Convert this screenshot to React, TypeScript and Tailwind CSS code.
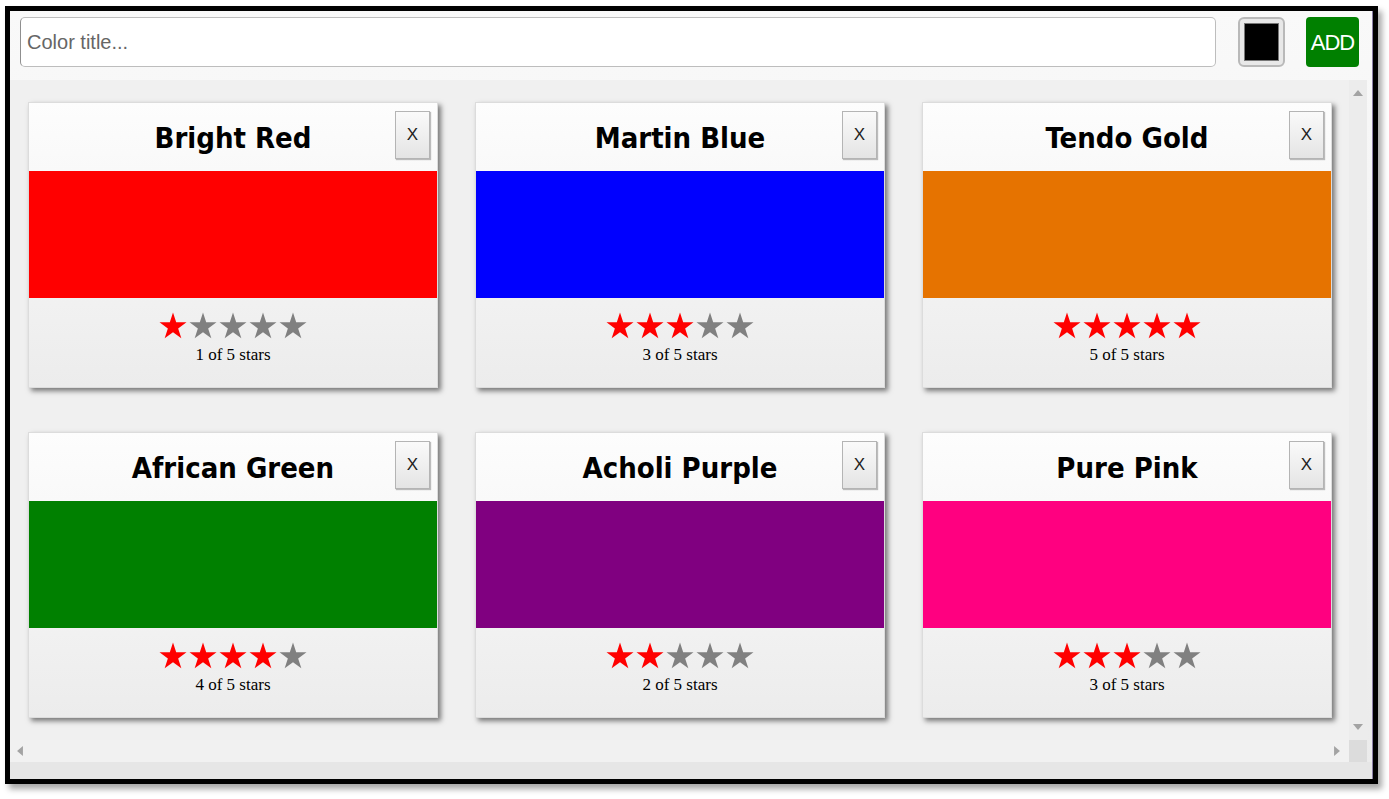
const colors = [
  { title: 'Bright Red', hex: '#ff0000', rating: 1 },
  { title: 'Martin Blue', hex: '#0000ff', rating: 3 },
  { title: 'Tendo Gold', hex: '#e67300', rating: 5 },
  { title: 'African Green', hex: '#008000', rating: 4 },
  { title: 'Acholi Purple', hex: '#800080', rating: 2 },
  { title: 'Pure Pink', hex: '#ff0080', rating: 3 },
];

const Star = ({ selected }: { selected: boolean }) => (
  <svg viewBox="0 0 24 24" className="w-[30px] h-[30px]">
    <path
      d="M12 1.2l2.55 7.85h8.25l-6.68 4.85 2.55 7.85L12 16.9l-6.67 4.85 2.55-7.85L1.2 9.05h8.25z"
      fill={selected ? '#ff0000' : '#808080'}
    />
  </svg>
);

const StarRating = ({ rating }: { rating: number }) => (
  <div className="flex flex-col items-center">
    <div className="flex">
      {[0, 1, 2, 3, 4].map((i) => (
        <Star key={i} selected={i < rating} />
      ))}
    </div>
    <p className="text-[17px] leading-[20px] mt-[4px] text-black font-['Liberation_Serif',serif]">
      {rating} of 5 stars
    </p>
  </div>
);

const ColorCard = ({ title, hex, rating }: { title: string; hex: string; rating: number }) => (
  <div className="h-[286px] flex flex-col bg-gradient-to-b from-[#fdfdfd] to-[#ececec] border border-[#dcdcdc] shadow-[3px_3px_5px_rgba(0,0,0,0.5)]">
    <div className="relative h-[68px] flex items-center justify-center pt-[4px]">
      <h1 className="text-[29px] font-bold text-black font-['DejaVu_Sans_Condensed','Liberation_Sans',sans-serif]">
        {title}
      </h1>
      <button className="absolute right-[7px] top-[8px] w-[35px] h-[48px] flex items-center justify-center bg-gradient-to-b from-[#fafafa] to-[#e4e4e4] border border-[#b4b4b4] shadow-[1px_1px_1px_rgba(0,0,0,0.25)] text-[17px] text-[#222] font-['Liberation_Sans',sans-serif]">
        X
      </button>
    </div>
    <div className="h-[127px]" style={{ backgroundColor: hex }} />
    <div className="flex-1 pt-[13px]">
      <StarRating rating={rating} />
    </div>
  </div>
);

const Arrow = ({ dir }: { dir: 'up' | 'down' | 'left' | 'right' }) => {
  const pts = {
    up: '0,7 6,0 12,7',
    down: '0,0 12,0 6,7',
    left: '7,0 7,12 0,6',
    right: '0,0 7,6 0,12',
  }[dir];
  const vertical = dir === 'up' || dir === 'down';
  return (
    <svg viewBox={vertical ? '0 0 12 7' : '0 0 7 12'} className={vertical ? 'w-[10px] h-[6px]' : 'w-[6px] h-[10px]'}>
      <polygon points={pts} fill="#a3a3a3" />
    </svg>
  );
};

export default function App() {
  return (
    <div className="w-[1389px] h-[799px] bg-white overflow-hidden pt-[6px] pl-[5px]">
      <div className="w-[1373px] h-[778px] border-[5px] border-black shadow-[4px_5px_6px_rgba(0,0,0,0.35)] flex flex-col bg-gradient-to-b from-[#f9f9f9] to-[#ebebeb] font-['Liberation_Sans',sans-serif]">
        {/* top bar */}
        <div className="h-[69px] flex items-start pt-[6px] pl-[10px] pr-[9px] border-r border-[#8a7fa6]">
          <input
            placeholder="Color title..."
            className="w-[1196px] h-[50px] px-[6px] rounded-[5px] bg-white border border-[#bdbdbd] border-l-[#8f8f8f] text-[20px] placeholder:text-[#666] outline-none"
          />
          <div className="ml-[22px] w-[47px] h-[50px] rounded-[6px] bg-[#e8e8e8] border-2 border-[#b9b9b9] p-[4px]">
            <div className="w-full h-full bg-black border border-[#777]" />
          </div>
          <button className="ml-[21px] w-[53px] h-[50px] rounded-[4px] bg-[#008000] text-white text-[22px] tracking-[-1px] flex items-center justify-center">
            ADD
          </button>
        </div>

        {/* scroll area */}
        <div className="h-[660px] flex pr-[5px] border-r border-[#8a7fa6]">
          <div className="flex-1 overflow-hidden pl-[18px] pt-[22px] bg-[#f0f0f0]">
            <div className="grid grid-cols-[410px_410px_410px] gap-x-[37px] gap-y-[44px]">
              {colors.map((c) => (
                <ColorCard key={c.title} {...c} />
              ))}
            </div>
          </div>
          <div className="w-[18px] bg-[#ececec] flex flex-col items-center justify-between py-[10px]">
            <Arrow dir="up" />
            <Arrow dir="down" />
          </div>
        </div>

        {/* horizontal scrollbar */}
        <div className="h-[22px] flex pr-[5px] border-r border-[#8a7fa6]">
          <div className="flex-1 bg-[#f1f1f1] flex items-center justify-between pl-[7px] pr-[9px]">
            <Arrow dir="left" />
            <Arrow dir="right" />
          </div>
          <div className="w-[18px] bg-[#dcdcdc]" />
        </div>

        <div className="flex-1 bg-[#e6e6e6] border-r border-[#8a7fa6]" />
      </div>
    </div>
  );
}
